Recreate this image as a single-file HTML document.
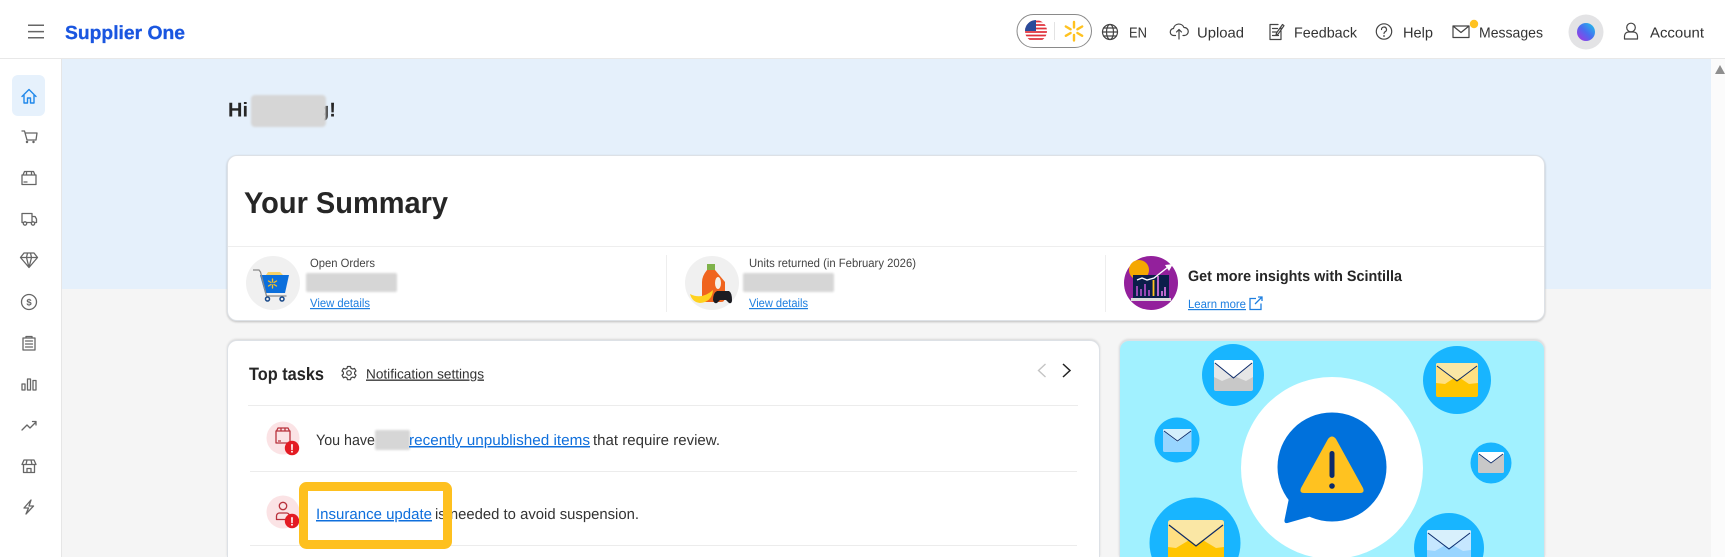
<!DOCTYPE html>
<html lang="en"><head><meta charset="utf-8"><title>Supplier One</title>
<style>
html,body{margin:0;padding:0;width:1725px;height:557px;overflow:hidden;background:#f5f5f5;font-family:"Liberation Sans",sans-serif}
#page{position:relative;width:1725px;height:557px;overflow:hidden;background:#f5f5f5}
.a{position:absolute;box-sizing:border-box}
#hdr{left:0;top:0;width:1725px;height:59px;background:#fff;border-bottom:1px solid #e8e8e8}
#nav{left:0;top:59px;width:62px;height:498px;background:#fff;border-right:1px solid #e6e6e6}
#act{left:12px;top:75px;width:33px;height:41px;background:#e6f1fc;border-radius:6px}
#band{left:62px;top:59px;width:1649px;height:230px;background:#e5f0fb}
#sb{left:1711px;top:59px;width:14px;height:498px;background:#fbfbfb}
.card{background:#fff;border:1px solid #dde1e6;border-radius:10px;box-shadow:0 1px 2px rgba(0,0,0,.22)}
.open{border-bottom:0;border-radius:10px 10px 0 0;box-shadow:0 -1px 2px rgba(0,0,0,.12)}
#sum{left:227px;top:155px;width:1318px;height:166px}
#top{left:227px;top:340px;width:873px;height:217px}
#ban{left:1119px;top:340px;width:426px;height:217px;background:#a1f1ff;overflow:hidden}
svg#o{position:absolute;left:0;top:0;display:block}
text{font-family:"Liberation Sans",sans-serif;text-rendering:geometricPrecision}
.n{font-size:14.5px;fill:#333}
.s{font-size:12px;fill:#444}
.l{font-size:12px;fill:#1e7fe0;text-decoration:underline}
.t{font-size:15px;fill:#333}
.k{font-size:15px;fill:#0f6fdc;text-decoration:underline}
.i{fill:none;stroke:#666;stroke-width:1.3;stroke-linejoin:round;stroke-linecap:round}
.r{fill:none;stroke:#b8323c;stroke-width:1.3;stroke-linejoin:round}
.h{fill:none;stroke:#444;stroke-width:1.2;stroke-linejoin:round;stroke-linecap:round}
</style></head><body>
<div id="page">
<div class="a" id="hdr"></div>
<div class="a" id="nav"></div>
<div class="a" id="act"></div>
<div class="a" id="band"></div>
<div class="a" id="sb"></div>
<div class="a card" id="sum"></div>
<div class="a card open" id="top"></div>
<div class="a card open" id="ban"></div>
<svg id="o" width="1725" height="557" viewBox="0 0 1725 557" xmlns="http://www.w3.org/2000/svg">
<defs>
<filter id="b" x="-10%" y="-20%" width="120%" height="140%"><feGaussianBlur stdDeviation="1"/></filter>
<linearGradient id="av" x1="1" y1="0" x2="0" y2="1"><stop offset="0" stop-color="#19c8e8"/><stop offset=".5" stop-color="#4a6cf0"/><stop offset="1" stop-color="#b02fe0"/></linearGradient>
<clipPath id="bc"><rect x="1120" y="341" width="424" height="216"/></clipPath>
<clipPath id="fl"><circle cx="1036" cy="31" r="11"/></clipPath>
</defs>

<!-- header left -->
<path d="M28 25.3h16M28 31.6h16M28 37.8h16" stroke="#666" stroke-width="1.5" fill="none"/>
<text x="65" y="39" font-size="19" font-weight="700" fill="#1a56e0" stroke="#1a56e0" stroke-width=".3" textLength="120" lengthAdjust="spacingAndGlyphs">Supplier One</text>

<!-- locale pill -->
<rect x="1017" y="14.5" width="74.5" height="33" rx="16.5" fill="#fff" stroke="#8a8a8a" stroke-width="1"/>
<g clip-path="url(#fl)"><rect x="1025" y="20" width="22" height="22" fill="#fff"/>
<path d="M1025 21.5h22M1025 25h22M1025 28.5h22M1025 32h22M1025 35.5h22M1025 39h22" stroke="#e0323c" stroke-width="1.8"/>
<rect x="1025" y="20" width="11" height="11" fill="#2a4a9a"/></g>
<path d="M1054.5 22v18" stroke="#e3e3e3"/>
<g stroke="#ffc220" stroke-width="2.4" stroke-linecap="round"><path d="M1074 22v5.5M1074 35v5.5M1065.8 26.5l4.8 2.8M1082.2 26.5l-4.8 2.8M1065.8 35.8l4.8-2.8M1082.2 35.8l-4.8-2.8"/></g>

<!-- header right icons -->
<g class="h"><circle cx="1110" cy="32" r="7.5"/><ellipse cx="1110" cy="32" rx="3.5" ry="7.5"/><path d="M1102.5 32h15M1103.5 28h13M1103.5 36h13"/></g>
<text class="n" x="1129" y="37.5" textLength="18" lengthAdjust="spacingAndGlyphs">EN</text>
<path class="h" d="M1175.5 35.5H1174a3.5 3.5 0 0 1-.5-7 5.5 5.5 0 0 1 10.5-1 4 4 0 0 1 .5 8h-1.500M1179 39v-9.500M1176.5 32l2.500-2.500 2.500 2.500"/>
<text class="n" x="1197" y="37.5" textLength="47" lengthAdjust="spacingAndGlyphs">Upload</text>
<path class="h" d="M1281 28v11.5h-11v-15h8M1272.5 28.5h5M1272.5 32h4M1272.5 35.5h6M1276.5 33l6-8.5 1.500 1.200-6 8.500-2 .6z"/>
<text class="n" x="1294" y="37.5" textLength="63" lengthAdjust="spacingAndGlyphs">Feedback</text>
<circle class="h" cx="1384" cy="31.5" r="7.7"/>
<path class="h" d="M1381.5 29.5a2.5 2.5 0 1 1 3.7 2.2c-.9.5-1.200 1-1.200 1.800"/><circle cx="1384" cy="36" r=".9" fill="#444"/>
<text class="n" x="1403" y="37.5" textLength="30" lengthAdjust="spacingAndGlyphs">Help</text>
<path class="h" d="M1453 26h16v11.5h-16zM1453 26l8 6.5 8-6.5"/>
<circle cx="1474" cy="24" r="4.2" fill="#ffc220"/>
<text class="n" x="1479" y="37.5" textLength="64" lengthAdjust="spacingAndGlyphs">Messages</text>
<circle cx="1586" cy="32" r="17.5" fill="#e3e3e5"/><circle cx="1586" cy="32" r="9" fill="url(#av)"/>
<circle class="h" cx="1631" cy="27.5" r="4.3"/>
<path class="h" d="M1624.5 39v-3a4 4 0 0 1 4-4h5a4 4 0 0 1 4 4v3z"/>
<text class="n" x="1650" y="37.5" textLength="54" lengthAdjust="spacingAndGlyphs">Account</text>

<!-- sidebar icons -->
<path d="M22 96.5l7-7 7 7M24 94.5v8.500h3.500v-5h3v5h3.500v-8.500" fill="none" stroke="#2088ea" stroke-width="1.4" stroke-linejoin="round" stroke-linecap="round"/>
<g class="i">
<path d="M22 131h2.5l2.500 9h9l1-7H25.500"/><circle cx="27" cy="142" r=".6"/><circle cx="33.5" cy="142" r=".6"/>
<path d="M22 175h14v9.5h-14zM23 175l1.5-3.500h9l1.500 3.500M26.5 175v-3.500h5v3.500M24 182h3"/>
<path d="M22 213.5h10v9h-10zM32 216.5h3l1.5 2.500v3.500h-4.500"/><circle cx="25" cy="223.5" r="1.7" fill="#fff"/><circle cx="33" cy="223.5" r="1.7" fill="#fff"/>
<path d="M24 253h10l3.5 4.500-8.500 10-8.500-10zM20.5 257.500h17M26.5 257.500l2.500 10 2.500-10M26.5 257.500l1-4.500M31.5 257.500l-1-4.500"/>
<circle cx="29" cy="302" r="7.5"/>
<path d="M23 338h12v12h-12zM26 338v-1.5h6v1.500M25.5 341h7M25.5 344h7M25.5 347h7"/>
<path d="M22 384h3v6h-3zM27.5 379h3v11h-3zM33 380.5h3v9.500h-3z"/>
<path d="M22 430l5-5 3 3 6-6M32.5 421.500h3.500v3.500"/>
<path d="M24 460h10l2 4.500h-14zM23.5 464.500v8h11v-8M27 460l-1 4.500M31 460l1 4.500M27 472.500v-4h4v4"/>
<path d="M31 500l-7 8h4.500l-2.500 6 7.500-8h-4.500l2-6z"/>
</g>
<text x="29" y="305.5" font-size="9.5" font-weight="700" fill="#666" text-anchor="middle">$</text>

<!-- greeting -->
<text x="228" y="116.5" font-size="20" font-weight="700" fill="#262626">Hi</text>
<text x="317" y="116.5" font-size="20" font-weight="700" fill="#262626">g!</text>
<rect x="251" y="95" width="75" height="32" rx="4" fill="#d6d6d6" filter="url(#b)"/>

<!-- summary -->
<text x="244" y="213" font-size="30" font-weight="700" fill="#262626" textLength="204" lengthAdjust="spacingAndGlyphs">Your Summary</text>
<path d="M228 246.5h1316" stroke="#eee"/>
<path d="M666.5 255v57M1105.5 255v57" stroke="#eee"/>

<circle cx="273" cy="283" r="27" fill="#f0f0f0"/>
<path d="M266 275l2-3h12l3 3z" fill="#f7d266"/>
<path d="M260 275h29l-4 18h-20z" fill="#0b6fdc"/>
<path d="M253 270h6l1.5 2 6 24h20" fill="none" stroke="#8a8a8a" stroke-width="1.3"/>
<g stroke="#ffc220" stroke-width="1.3" stroke-linecap="round"><path d="M272.5 279v3M272.5 285v3M268.5 281l2.500 1.500M276.5 281l-2.500 1.500M268.5 286l2.500-1.500M276.5 286l-2.500-1.500"/></g>
<circle cx="267.5" cy="299" r="2" fill="none" stroke="#1a4a8a" stroke-width="1.5"/><circle cx="282" cy="299" r="2" fill="none" stroke="#1a4a8a" stroke-width="1.5"/>
<text class="s" x="310" y="267" textLength="65" lengthAdjust="spacingAndGlyphs">Open Orders</text>
<rect x="306" y="273" width="91" height="19" rx="2" fill="#d6d6d6" filter="url(#b)"/>
<text class="l" x="310" y="307" textLength="60" lengthAdjust="spacingAndGlyphs">View details</text>

<circle cx="712" cy="283" r="27" fill="#f0f0f0"/>
<rect x="707" y="264" width="8" height="7" fill="#7fb24a"/>
<path d="M707 270h8l10 12v15q0 5-4 5h-15q-4 0-4-5v-15q0-6 5-12z" fill="#f0641e"/>
<ellipse cx="718" cy="283" rx="3" ry="6" fill="#f5f0e8"/>
<path d="M690 294Q702 300 713 290Q712 302 700 303Q692 302 690 294z" fill="#ffd21f"/>
<path d="M717 291h12q3 2 3 9q0 4-3 3l-3-3h-6l-3 3q-3 1-4-3q0-7 4-9z" fill="#1c1c22"/>
<text class="s" x="749" y="267" textLength="167" lengthAdjust="spacingAndGlyphs">Units returned (in February 2026)</text>
<rect x="743" y="273" width="91" height="19" rx="2" fill="#d6d6d6" filter="url(#b)"/>
<text class="l" x="749" y="307" textLength="59" lengthAdjust="spacingAndGlyphs">View details</text>

<circle cx="1151" cy="283" r="27" fill="#93209c"/>
<circle cx="1139" cy="270" r="10" fill="#f5a800"/>
<rect x="1133" y="275" width="36" height="23" fill="#0b1e4a"/>
<rect x="1131" y="298" width="40" height="3" fill="#ddd"/>
<path d="M1137 296v-10M1141 296v-7M1145 296v-12M1149 296v-6" stroke="#a84cc0" stroke-width="1.8"/>
<path d="M1153.5 296v-16" stroke="#ffc220" stroke-width="1.8"/>
<path d="M1158 296v-20M1162 296v-5M1165 296v-9" stroke="#d070d8" stroke-width="1.8"/>
<path d="M1137 280l5-2 5 2 7-2 14-11" fill="none" stroke="#fff" stroke-width="1.4"/>
<path d="M1173 264l-8 1 4 6z" fill="#fff"/>
<text x="1188" y="281" font-size="15" font-weight="700" fill="#262626" textLength="214" lengthAdjust="spacingAndGlyphs">Get more insights with Scintilla</text>
<text class="l" x="1188" y="308" textLength="58" lengthAdjust="spacingAndGlyphs">Learn more</text>
<path d="M1256 298.500h-6v11h11v-6M1255 304l7-7M1258 297h4v4" fill="none" stroke="#1e7fe0" stroke-width="1.3"/>

<!-- top tasks -->
<text x="249" y="380" font-size="18" font-weight="700" fill="#262626" textLength="75" lengthAdjust="spacingAndGlyphs">Top tasks</text>
<circle class="h" cx="349" cy="373" r="2.3"/>
<path class="h" d="M347.5 366.5h3l.5 1.800 1.700.8 1.800-.7 1.500 2.600-1.400 1.200v1.800l1.400 1.200-1.500 2.600-1.800-.7-1.700.8-.5 1.800h-3l-.5-1.800-1.700-.8-1.800.7-1.500-2.600 1.400-1.200v-1.800l-1.400-1.200 1.500-2.600 1.800.7 1.700-.8z"/>
<text x="366" y="378.5" font-size="13.5" fill="#333" text-decoration="underline" textLength="118" lengthAdjust="spacingAndGlyphs">Notification settings</text>
<path d="M1045.5 364l-7 6.500 7 6.500" fill="none" stroke="#c4c4c4" stroke-width="1.4"/>
<path d="M1063 364l7 6.500-7 6.500" fill="none" stroke="#222" stroke-width="1.5"/>
<path d="M248 405.5h830M250 471.5h827M250 545.5h827" stroke="#ececec"/>

<circle cx="283" cy="438" r="16.5" fill="#fbe3e5"/>
<path class="r" d="M276 431h14v12h-14zM276.5 431l1.500-3h10l1.500 3M281 431v-3h4v3M278 441h3"/>
<circle cx="292" cy="448" r="7.2" fill="#e31b23"/>
<text x="292" y="452.5" font-size="12" font-weight="700" fill="#fff" text-anchor="middle">!</text>
<text class="t" x="316" y="445" textLength="59" lengthAdjust="spacingAndGlyphs">You have</text>
<rect x="375" y="430" width="35" height="20" rx="2" fill="#d6d6d6" filter="url(#b)"/>
<text class="k" x="409" y="445" textLength="181" lengthAdjust="spacingAndGlyphs">recently unpublished items</text>
<text class="t" x="593" y="445" textLength="127" lengthAdjust="spacingAndGlyphs">that require review.</text>

<circle cx="283" cy="512" r="16.5" fill="#fbe3e5"/>
<circle class="r" cx="283" cy="506" r="3.7"/>
<path class="r" d="M276.5 519.5v-3.500a3 3 0 0 1 3-3h7a3 3 0 0 1 3 3v3.500z"/>
<circle cx="292" cy="521" r="7.2" fill="#e31b23"/>
<text x="292" y="525.5" font-size="12" font-weight="700" fill="#fff" text-anchor="middle">!</text>
<text class="k" x="316" y="519" textLength="116" lengthAdjust="spacingAndGlyphs">Insurance update</text>
<text class="t" x="435" y="519" textLength="204" lengthAdjust="spacingAndGlyphs">is needed to avoid suspension.</text>
<rect x="303.5" y="486.5" width="144" height="58" rx="3" fill="none" stroke="#fec01f" stroke-width="9"/>

<!-- banner -->
<g clip-path="url(#bc)">
<circle cx="1332" cy="468" r="91" fill="#fff"/>
<circle cx="1332" cy="467" r="54.5" fill="#0071dc"/>
<path d="M1289 498L1284.5 520q-.5 3.500 3 3L1312 516z" fill="#0071dc"/>
<path d="M1328 439q4-5 8 0l27 49q2 5-3 5h-56q-5 0-3-5z" fill="#ffc220"/>
<rect x="1329.5" y="451" width="5" height="27" rx="2.5" fill="#0b2a6a"/>
<circle cx="1332" cy="486" r="2.8" fill="#0b2a6a"/>

<circle cx="1233" cy="375" r="31" fill="#18b5ff"/>
<rect x="1214" y="360" width="39" height="31" rx="2" fill="#c8c8c8"/><path d="M1214 362q0-2 2-2h35q2 0 2 2v15l-7 4-12-5-12 5-8-4z" fill="#e6e6e6"/><path d="M1214 362q0-2 2-2h35q2 0 2 2l-18.5 15.500z" fill="#fff"/><path d="M1215 363l18.5 15 18.500-15" fill="none" stroke="#0b2a6a" stroke-width="1"/>

<circle cx="1457" cy="380" r="34" fill="#18b5ff"/>
<rect x="1436" y="363" width="42" height="34" rx="2" fill="#ffc500"/><path d="M1436 365q0-2 2-2h38q2 0 2 2v18l-9 1-12-8-12 8-9-1z" fill="#ffe082"/><path d="M1436 365q0-2 2-2h38q2 0 2 2l-21 15z" fill="#fae7a5"/><path d="M1437 366l20 15 20-15" fill="none" stroke="#0b2a6a" stroke-width="1"/>

<circle cx="1177" cy="440" r="22.5" fill="#18b5ff"/>
<rect x="1163" y="429" width="28.5" height="23" rx="1.5" fill="#98d5ff"/><path d="M1163 431q0-2 1.5-2h25.500q1.500 0 1.500 2l-14 11z" fill="#d4effc"/><path d="M1164 431l13.5 10 13.500-10" fill="none" stroke="#0b2a6a" stroke-width=".8"/>

<circle cx="1491" cy="463" r="20.5" fill="#18b5ff"/>
<rect x="1478" y="452" width="26" height="21" rx="1.5" fill="#c8c8c8"/><path d="M1478 454q0-2 1.5-2h23q1.500 0 1.500 2l-13 9z" fill="#fff"/><path d="M1479 454l12 9 12-9" fill="none" stroke="#0b2a6a" stroke-width=".8"/>

<circle cx="1195" cy="543" r="45.5" fill="#18b5ff"/>
<path d="M1168 557v-34q0-3 3-3h50q3 0 3 3v34z" fill="#ffc500"/><path d="M1168 523q0-3 3-3h50q3 0 3 3v24l-8 1-20-12-20 12-8-1z" fill="#ffe082"/><path d="M1168 523q0-3 3-3h50q3 0 3 3l-28 22z" fill="#fae7a5"/><path d="M1169 525l27 21 27-21" fill="none" stroke="#0b2a6a" stroke-width="1.2"/>

<circle cx="1449" cy="548" r="35" fill="#18b5ff"/>
<path d="M1427 557v-25q0-2 2-2h40q2 0 2 2v25z" fill="#98d5ff"/><path d="M1427 532q0-2 2-2h40q2 0 2 2v18l-8 1-14-8-14 8-8-1z" fill="#c6e7ff"/><path d="M1427 532q0-2 2-2h40q2 0 2 2l-22 16z" fill="#d8f0fc"/><path d="M1428 533l21 16 21-16" fill="none" stroke="#0b2a6a" stroke-width="1"/>
</g>

<!-- scrollbar arrow -->
<path d="M1715 74l5 -9 5 9z" fill="#8f8f8f"/>
</svg>
</div>
</body></html>
